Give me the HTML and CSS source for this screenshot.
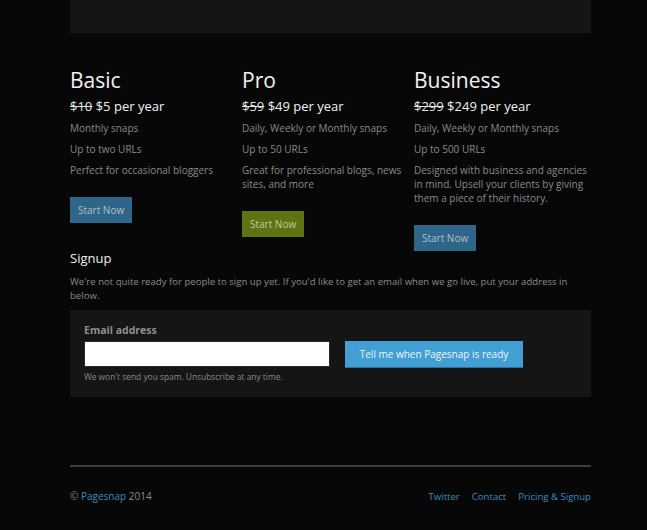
FILE: index.html
```html
<!DOCTYPE html>
<html>
<head>
<meta charset="utf-8">
<link rel="stylesheet" href="styles.css">
</head>
<body>
<div class="page">
  <div class="topbar"></div>
  <div class="plans">
    <div class="plan">
      <h2>Basic</h2>
      <p class="price"><s>$10</s> $5 per year</p>
      <ul>
        <li>Monthly snaps</li>
        <li>Up to two URLs</li>
        <li>Perfect for occasional bloggers</li>
      </ul>
      <a class="btn btn-blue">Start Now</a>
    </div>
    <div class="plan">
      <h2>Pro</h2>
      <p class="price"><s>$59</s> $49 per year</p>
      <ul>
        <li>Daily, Weekly or Monthly snaps</li>
        <li>Up to 50 URLs</li>
        <li>Great for professional blogs, news sites, and more</li>
      </ul>
      <a class="btn btn-green">Start Now</a>
    </div>
    <div class="plan">
      <h2>Business</h2>
      <p class="price"><s>$299</s> $249 per year</p>
      <ul>
        <li>Daily, Weekly or Monthly snaps</li>
        <li>Up to 500 URLs</li>
        <li>Designed with business and agencies in mind. Upsell your clients by giving them a piece of their history.</li>
      </ul>
      <a class="btn btn-blue">Start Now</a>
    </div>
  </div>
  <h3 class="signup-title">Signup</h3>
  <p class="signup-text">We're not quite ready for people to sign up yet. If you'd like to get an email when we go live, put your address in below.</p>
  <form class="signup-form">
    <label class="label">Email address</label>
    <div class="row">
      <input class="email" type="text">
      <button class="submit" type="button">Tell me when Pagesnap is ready</button>
    </div>
    <p class="help">We won't send you spam. Unsubscribe at any time.</p>
  </form>
  <footer class="footer">
    <div class="copy">© <a>Pagesnap</a> 2014</div>
    <nav class="links"><a>Twitter</a><a>Contact</a><a>Pricing &amp; Signup</a></nav>
  </footer>
</div>
</body>
</html>
```
FILE: styles.css
```css
html, body {
  margin: 0;
  padding: 0;
  background: #070707;
}
body {
  font-family: "Open Sans", "DejaVu Sans", sans-serif;
  color: #8a8a8a;
  font-size: 10px;
}
.page {
  width: 521px;
  margin-left: 70px;
}
.topbar {
  height: 33px;
  background: #151515;
}
.plans {
  display: flex;
  margin-top: 33px;
}
.plan {
  width: 172px;
  flex: none;
}
.plan:last-child { width: 177px; }
.plan h2 {
  margin: 0;
  font-size: 21px;
  font-weight: 400;
  color: #f2f2f2;
  line-height: 28px;
}
.price {
  margin: 3px 0 0;
  font-size: 13px;
  color: #f2f2f2;
  line-height: 18px;
}
.price s { color: #e6e6e6; }
.plan ul {
  list-style: none;
  margin: 6px 0 0;
  padding: 0;
}
.plan li {
  line-height: 14px;
  margin-bottom: 7px;
}
.btn {
  display: inline-block;
  margin-top: 13px;
  padding: 0 8px;
  height: 26px;
  line-height: 26px;
  font-size: 10px;
  color: #b3bec6;
}
.btn-blue { background: #2e6689; }
.btn-green { background: #5d7412; color: #c2c9a4; }
.signup-title {
  margin: -1px 0 0;
  font-size: 13px;
  font-weight: 400;
  color: #efefef;
  line-height: 16px;
}
.signup-text {
  margin: 9px 0 0;
  font-size: 9.6px;
  line-height: 14px;
  color: #8a8a8a;
}
.signup-form {
  margin-top: 7px;
  background: #151515;
  padding: 13px 14px 14px;
}
.label {
  display: block;
  font-weight: 700;
  font-size: 10.5px;
  color: #8f8f8f;
  line-height: 15px;
}
.row {
  display: flex;
  align-items: flex-start;
  margin-top: 3px;
}
.email {
  width: 246px;
  height: 26px;
  box-sizing: border-box;
  border: 1px solid #2a2a2a;
  background: #fff;
  margin: 0;
}
.submit {
  margin-left: 15px;
  width: 178px;
  height: 27px;
  border: 0;
  border-bottom: 1px solid #2d6f99;
  background: #429fd4;
  color: #eef6fb;
  font-family: "Open Sans", "DejaVu Sans", sans-serif;
  font-size: 10px;
  padding: 0;
}
.help {
  margin: 3px 0 0;
  font-size: 8.4px;
  line-height: 12px;
  color: #8a8a8a;
}
.footer {
  margin-top: 68px;
  border-top: 2px solid #3e3e3e;
  display: flex;
  justify-content: space-between;
  padding-top: 22px;
  line-height: 15px;
}
.footer a { color: #3d8ac2; }
.links { font-size: 9.6px; }
.links a { margin-left: 12px; }
```
